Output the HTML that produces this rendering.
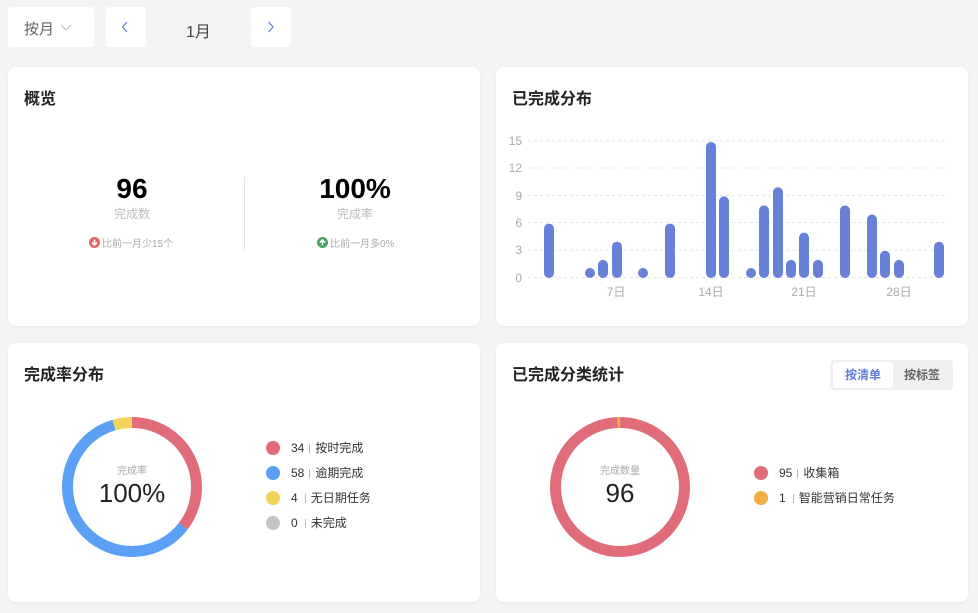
<!DOCTYPE html>
<html><head><meta charset="utf-8"><style>
*{margin:0;padding:0;box-sizing:border-box}
body{width:978px;height:613px;background:#f4f4f4;font-family:"Liberation Sans","Noto Sans CJK SC",sans-serif;position:relative;overflow:hidden;color:#333}
.abs{position:absolute}
.btn{position:absolute;background:#fff;border-radius:3px;top:7px;height:40px}
.card{position:absolute;background:#fff;border-radius:8px;box-shadow:0 1px 3px rgba(0,0,0,.05)}
.title{position:absolute;left:16px;top:21px;font-size:16px;font-weight:bold;color:#222;line-height:24px}
.c{text-align:center}
.leg{position:absolute;font-size:12px;color:#333;display:flex;align-items:center;height:16px;line-height:16px}
.leg b{font-weight:normal;font-family:"Noto Sans CJK SC",sans-serif;line-height:16px}
.dot{width:14px;height:14px;border-radius:50%;margin-right:11px}
.sep{display:inline-block;width:1px;height:9px;background:#bbb;margin:0 5px}
</style></head><body>
<div class="btn" style="left:8px;width:86px"><span class="abs" style="left:16px;top:11px;font-size:15px;color:#666">按月</span>
<svg class="abs" style="left:52px;top:17px" width="12" height="8"><path d="M1 1 L6 6 L11 1" fill="none" stroke="#bbb" stroke-width="1"/></svg></div>
<div class="btn" style="left:106px;width:40px"><svg class="abs" style="left:15px;top:14px" width="8" height="12"><path d="M6 1 L1.5 6 L6 11" fill="none" stroke="#5b7fd8" stroke-width="1.2"/></svg></div>
<div class="abs" style="left:186px;top:18px;font-size:16px;color:#444">1月</div>
<div class="btn" style="left:251px;width:40px"><svg class="abs" style="left:16px;top:14px" width="8" height="12"><path d="M1.5 1 L6 6 L1.5 11" fill="none" stroke="#5b7fd8" stroke-width="1.2"/></svg></div>

<div class="card" style="left:8px;top:67px;width:472px;height:259px">
<div class="title">概览</div>
<div class="abs c" style="left:64px;width:120px;top:106px;font-size:28px;font-weight:bold;color:#000">96</div>
<div class="abs c" style="left:64px;width:120px;top:138px;font-size:12px;color:#bbb">完成数</div>
<div class="abs" style="left:81px;top:168px;font-size:10px;color:#aaa;display:flex;align-items:center"><span style="width:11px;height:11px;border-radius:50%;background:#e06464;display:inline-block;margin-right:2px;position:relative"><svg width="11" height="11" style="position:absolute;left:0;top:0"><path d="M5.5 2.5V8M3 5.5L5.5 8L8 5.5" fill="none" stroke="#fff" stroke-width="1.6"/></svg></span>比前一月少15个</div>
<div class="abs" style="left:236px;top:110px;width:1px;height:74px;background:#e4e4e4"></div>
<div class="abs c" style="left:287px;width:120px;top:106px;font-size:28px;font-weight:bold;color:#000">100%</div>
<div class="abs c" style="left:287px;width:120px;top:138px;font-size:12px;color:#bbb">完成率</div>
<div class="abs" style="left:309px;top:168px;font-size:10px;color:#aaa;display:flex;align-items:center"><span style="width:11px;height:11px;border-radius:50%;background:#4aa365;display:inline-block;margin-right:2px;position:relative"><svg width="11" height="11" style="position:absolute;left:0;top:0"><path d="M5.5 8.5V3M3 5.5L5.5 3L8 5.5" fill="none" stroke="#fff" stroke-width="1.6"/></svg></span>比前一月多0%</div>
</div>

<div class="card" style="left:496px;top:67px;width:472px;height:259px">
<div class="title">已完成分布</div>
<svg class="abs" style="left:0;top:0" width="472" height="259">
<g stroke="#e4e4e4" stroke-dasharray="3,3" stroke-width="1">
<line x1="32" x2="450" y1="74" y2="74"/><line x1="32" x2="450" y1="101" y2="101"/><line x1="32" x2="450" y1="128.5" y2="128.5"/><line x1="32" x2="450" y1="155.5" y2="155.5"/><line x1="32" x2="450" y1="183" y2="183"/><line x1="32" x2="450" y1="210.5" y2="210.5"/></g>
<g font-size="12" fill="#aaa" text-anchor="end"><text x="26" y="78">15</text><text x="26" y="105">12</text><text x="26" y="133">9</text><text x="26" y="160">6</text><text x="26" y="187">3</text><text x="26" y="215">0</text></g>
<g font-size="12" fill="#aaa" text-anchor="middle"><text x="120" y="229">7日</text><text x="215" y="229">14日</text><text x="308" y="229">21日</text><text x="403" y="229">28日</text></g>
<g fill="#6881d8" id="bars"></g>
</svg>
</div>

<div class="card" style="left:8px;top:343px;width:472px;height:259px">
<div class="title">完成率分布</div>
<svg class="abs" style="left:0;top:0" width="472" height="259">
<g transform="rotate(-90 124 144)" fill="none" stroke-width="11">
<circle cx="124" cy="144" r="64.5" stroke="#e06c7a" stroke-dasharray="143.5 500"/>
<circle cx="124" cy="144" r="64.5" stroke="#5ca0f6" stroke-dasharray="0 143.5 243.5 500"/>
<circle cx="124" cy="144" r="64.5" stroke="#f4d35a" stroke-dasharray="0 387 18 500"/>
</g>
<text x="124" y="131" font-size="10" fill="#aaa" text-anchor="middle">完成率</text>
<text x="124" y="159" font-size="26" fill="#222" text-anchor="middle">100%</text>
</svg>
<div class="leg" style="left:258px;top:97px"><span class="dot" style="background:#e06c7a"></span>34<span class="sep"></span><b>按时完成</b></div>
<div class="leg" style="left:258px;top:122px"><span class="dot" style="background:#5ca0f6"></span>58<span class="sep"></span><b>逾期完成</b></div>
<div class="leg" style="left:258px;top:147px"><span class="dot" style="background:#f4d35a"></span>4<span class="sep" style="margin-left:7px"></span><b>无日期任务</b></div>
<div class="leg" style="left:258px;top:172px"><span class="dot" style="background:#c4c4c4"></span>0<span class="sep" style="margin-left:7px"></span><b>未完成</b></div>
</div>

<div class="card" style="left:496px;top:343px;width:472px;height:259px">
<div class="title">已完成分类统计</div>
<div class="abs" style="left:334px;top:17px;width:123px;height:30px;background:#f0f0f0;border-radius:4px"></div>
<div class="abs c" style="left:337px;top:19px;width:60px;height:26px;background:#fff;border-radius:3px;font-size:12px;font-weight:bold;color:#5b7fd8;line-height:26px">按清单</div>
<div class="abs c" style="left:397px;top:19px;width:58px;height:26px;font-size:12px;font-weight:bold;color:#666;line-height:26px">按标签</div>
<svg class="abs" style="left:0;top:0" width="472" height="259">
<g transform="rotate(-90 124 144)" fill="none" stroke-width="11">
<circle cx="124" cy="144" r="64.5" stroke="#e06c7a"/>
<circle cx="124" cy="144" r="64.5" stroke="#f0ae45" stroke-dasharray="0 402.5 3 500"/>
</g>
<text x="124" y="131" font-size="10" fill="#aaa" text-anchor="middle">完成数量</text>
<text x="124" y="159" font-size="26" fill="#222" text-anchor="middle">96</text>
</svg>
<div class="leg" style="left:258px;top:122px"><span class="dot" style="background:#e06c7a"></span>95<span class="sep"></span><b>收集箱</b></div>
<div class="leg" style="left:258px;top:147px"><span class="dot" style="background:#f0ae45"></span>1<span class="sep" style="margin-left:7px"></span><b>智能营销日常任务</b></div>
</div>
<script>
var xs=[53,94,107,121,147,174,215,228,255,268,282,295,308,322,349,376,389,403,443],vs=[6,1,2,4,1,6,15,9,1,8,10,2,5,2,8,7,3,2,4];
var g=document.getElementById('bars'),s='';
for(var i=0;i<xs.length;i++){var h=Math.max(vs[i]*9.07,10);s+='<rect x="'+(xs[i]-5)+'" y="'+(211-h)+'" width="10" height="'+h+'" rx="5"/>';}
g.innerHTML=s;
</script>
</body></html>
